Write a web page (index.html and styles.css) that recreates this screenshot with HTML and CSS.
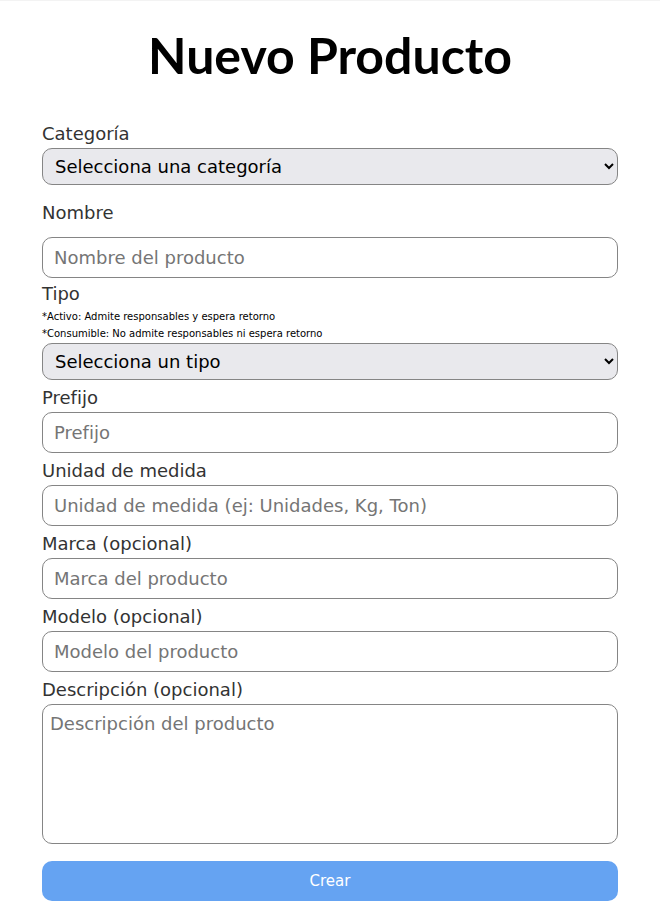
FILE: index.html
```html
<!DOCTYPE html>
<html lang="es">
<head>
    <meta charset="UTF-8">
    <meta name="viewport" content="width=device-width, initial-scale=1.0">
    <title>Nuevo Producto</title>
    <link rel="stylesheet" href="styles.css">
</head>
<body>
    <div class="container">
        <h1>Nuevo Producto</h1>
        <form class="product-form">
            <div class="field">
                <label for="categoria">Categoría</label>
                <select id="categoria">
                    <option>Selecciona una categoría</option>
                </select>
            </div>
            <div class="field field-nombre">
                <label for="nombre">Nombre</label>
                <input type="text" id="nombre" placeholder="Nombre del producto">
            </div>
            <div class="field field-tipo">
                <label for="tipo">Tipo</label>
                <p class="hint">*Activo: Admite responsables y espera retorno</p>
                <p class="hint">*Consumible: No admite responsables ni espera retorno</p>
                <select id="tipo">
                    <option>Selecciona un tipo</option>
                </select>
            </div>
            <div class="field">
                <label for="prefijo">Prefijo</label>
                <input type="text" id="prefijo" placeholder="Prefijo">
            </div>
            <div class="field">
                <label for="unidad">Unidad de medida</label>
                <input type="text" id="unidad" placeholder="Unidad de medida (ej: Unidades, Kg, Ton)">
            </div>
            <div class="field">
                <label for="marca">Marca (opcional)</label>
                <input type="text" id="marca" placeholder="Marca del producto">
            </div>
            <div class="field">
                <label for="modelo">Modelo (opcional)</label>
                <input type="text" id="modelo" placeholder="Modelo del producto">
            </div>
            <div class="field">
                <label for="descripcion">Descripción (opcional)</label>
                <textarea id="descripcion" placeholder="Descripción del producto"></textarea>
            </div>
            <button type="submit" class="submit-btn">Crear</button>
        </form>
    </div>
</body>
</html>
```

FILE: styles.css
```css
* {
    margin: 0;
    padding: 0;
    box-sizing: border-box;
    font-family: 'DejaVu Sans', 'Lato', sans-serif;
}

body {
    background: #ffffff;
    color: #000000;
    border-top: 1px solid #f3f3f3;
}

.container {
    max-width: 576px;
    margin: 0 auto;
}

h1 {
    margin-top: 24px;
    font-family: 'Lato', sans-serif;
    font-size: 50px;
    line-height: 60px;
    font-weight: 700;
    text-align: center;
    color: #000000;
}

.product-form {
    display: flex;
    flex-direction: column;
    margin-top: 35px;
}

.field {
    display: flex;
    flex-direction: column;
    margin-bottom: 4px;
}

.field label {
    font-size: 18px;
    line-height: 28px;
    color: #333333;
}

.field-nombre {
    margin-top: 10px;
}

.field-nombre label {
    margin-bottom: 10px;
}

.field-tipo {
    margin-top: -2px;
}

.hint {
    font-size: 10px;
    line-height: 16.5px;
    color: #000000;
}

.field-tipo .hint:first-of-type {
    margin-top: 1px;
}

select {
    height: 37px;
    padding: 0 8px;
    font-size: 18px;
    color: #000000;
    background-color: #e9e9ed;
    border: 1px solid #858585;
    border-radius: 10px;
}

.field-tipo select {
    margin-top: 1px;
}

input,
textarea {
    height: 41px;
    padding: 0 11px;
    font-size: 18px;
    color: #000000;
    background: #ffffff;
    border: 1px solid #858585;
    border-radius: 10px;
}

textarea {
    height: 140px;
    padding: 8px 7px;
    resize: none;
}

input::placeholder,
textarea::placeholder {
    color: #757575;
}

.submit-btn {
    margin-top: 13px;
    height: 40px;
    font-size: 15px;
    color: #ffffff;
    background: #65a3f2;
    border: none;
    border-radius: 10px;
}
```
